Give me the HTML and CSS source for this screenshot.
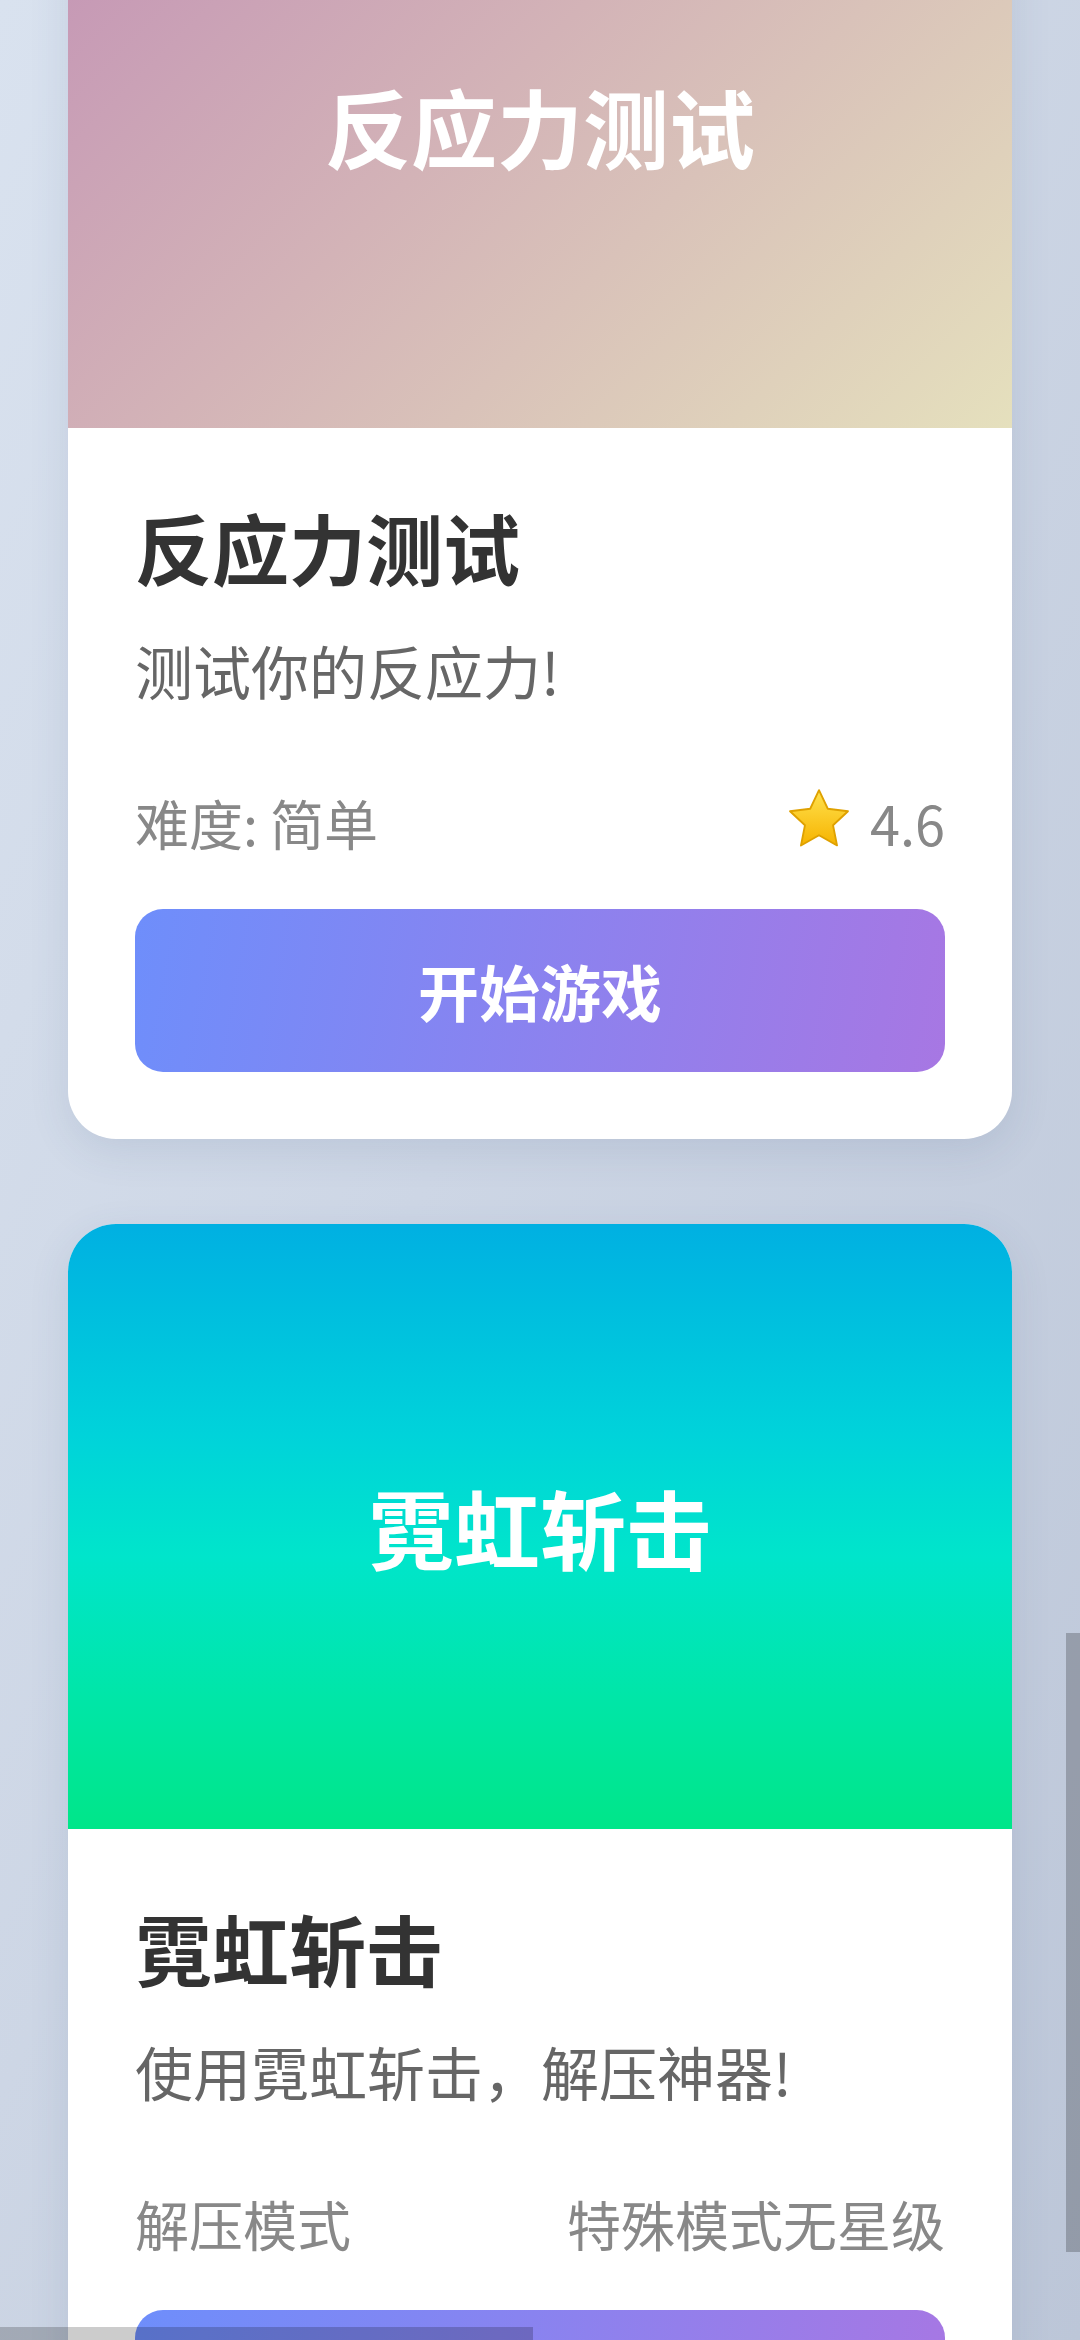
FILE: index.html
```html
<!DOCTYPE html>
<html lang="zh-CN">
<head>
<meta charset="utf-8">
<title>游戏列表</title>
<link rel="stylesheet" href="styles.css">
</head>
<body>
<main class="game-list">
  <article class="card">
    <div class="card-hero hero-reaction">反应力测试</div>
    <div class="card-body">
      <h2 class="card-title">反应力测试</h2>
      <p class="card-desc">测试你的反应力!</p>
      <div class="card-meta">
        <span>难度: 简单</span>
        <span class="rating">
          <svg class="star" viewBox="0 0 24 24" aria-hidden="true">
            <defs>
              <linearGradient id="sg" x1="0" y1="0" x2="0" y2="1">
                <stop offset="0" stop-color="#ffe24f"/>
                <stop offset="1" stop-color="#f6b300"/>
              </linearGradient>
            </defs>
            <path d="M12 2.3l2.85 6.05 6.55.8-4.85 4.55 1.3 6.55L12 16.95l-5.85 3.3 1.3-6.55L2.6 9.15l6.55-.8z" fill="url(#sg)" stroke="#dfa100" stroke-width="0.6" stroke-linejoin="round"/>
          </svg>
          <span>4.6</span>
        </span>
      </div>
      <button class="play-btn">开始游戏</button>
    </div>
  </article>

  <article class="card">
    <div class="card-hero hero-neon">霓虹斩击</div>
    <div class="card-body">
      <h2 class="card-title">霓虹斩击</h2>
      <p class="card-desc">使用霓虹斩击，解压神器!</p>
      <div class="card-meta">
        <span>解压模式</span>
        <span>特殊模式无星级</span>
      </div>
      <button class="play-btn">开始游戏</button>
    </div>
  </article>
</main>
<div class="scroll-thumb-v"></div>
<div class="scroll-thumb-h"></div>
</body>
</html>
```
FILE: styles.css
```css
html, body {
  margin: 0;
  padding: 0;
  height: 2340px;
  overflow: hidden;
}

body {
  background: linear-gradient(115deg, #d9e2ef 0%, #cdd6e5 45%, #bcc6d8 100%);
  font-family: "Noto Sans CJK SC", "Noto Sans", sans-serif;
}

.game-list {
  display: flex;
  flex-direction: column;
  align-items: center;
  gap: 85px;
  margin-top: -177px;
}

.card {
  width: 944px;
  background: #ffffff;
  border-radius: 48px;
  overflow: hidden;
  box-shadow: 0 12px 40px rgba(60, 80, 120, 0.12);
}

.card-hero {
  height: 605px;
  display: flex;
  align-items: center;
  justify-content: center;
  color: #ffffff;
  font-size: 86px;
  font-weight: 700;
  line-height: 1;
}

.hero-reaction {
  background: linear-gradient(135deg, #c291b5 0%, #d3b3b7 45%, #e5e0bd 100%);
}

.hero-neon {
  background: linear-gradient(180deg, #00b0e2 0%, #00d3da 35%, #00e5cb 55%, #00e6a8 78%, #00e689 100%);
}

.card-body {
  padding: 73px 67px 67px;
}

.card-title {
  margin: 0;
  font-size: 77px;
  line-height: 92px;
  font-weight: 700;
  color: #333333;
}

.card-desc {
  margin: 42px 0 0;
  font-size: 58px;
  line-height: 70px;
  color: #666666;
}

.card-meta {
  margin-top: 86px;
  display: flex;
  justify-content: space-between;
  align-items: center;
  font-size: 54px;
  line-height: 64px;
  color: #888888;
}

.rating {
  display: flex;
  align-items: center;
  gap: 14px;
}

.star {
  width: 74px;
  height: 74px;
  margin: -8px 0 -2px;
}

.play-btn {
  display: block;
  width: 100%;
  height: 163px;
  margin-top: 54px;
  border: none;
  border-radius: 28px;
  background: linear-gradient(100deg, #6e8efb 0%, #a777e3 100%);
  color: #ffffff;
  font-family: "Noto Sans CJK SC", "Noto Sans", sans-serif;
  font-size: 61px;
  font-weight: 700;
  line-height: 1;
  padding: 0;
}

.scroll-thumb-v {
  position: fixed;
  right: 0;
  top: 1633px;
  width: 14px;
  height: 619px;
  background: rgba(0, 0, 0, 0.22);
}

.scroll-thumb-h {
  position: fixed;
  left: 0;
  bottom: 0;
  width: 533px;
  height: 13px;
  background: rgba(0, 0, 0, 0.2);
}
```
